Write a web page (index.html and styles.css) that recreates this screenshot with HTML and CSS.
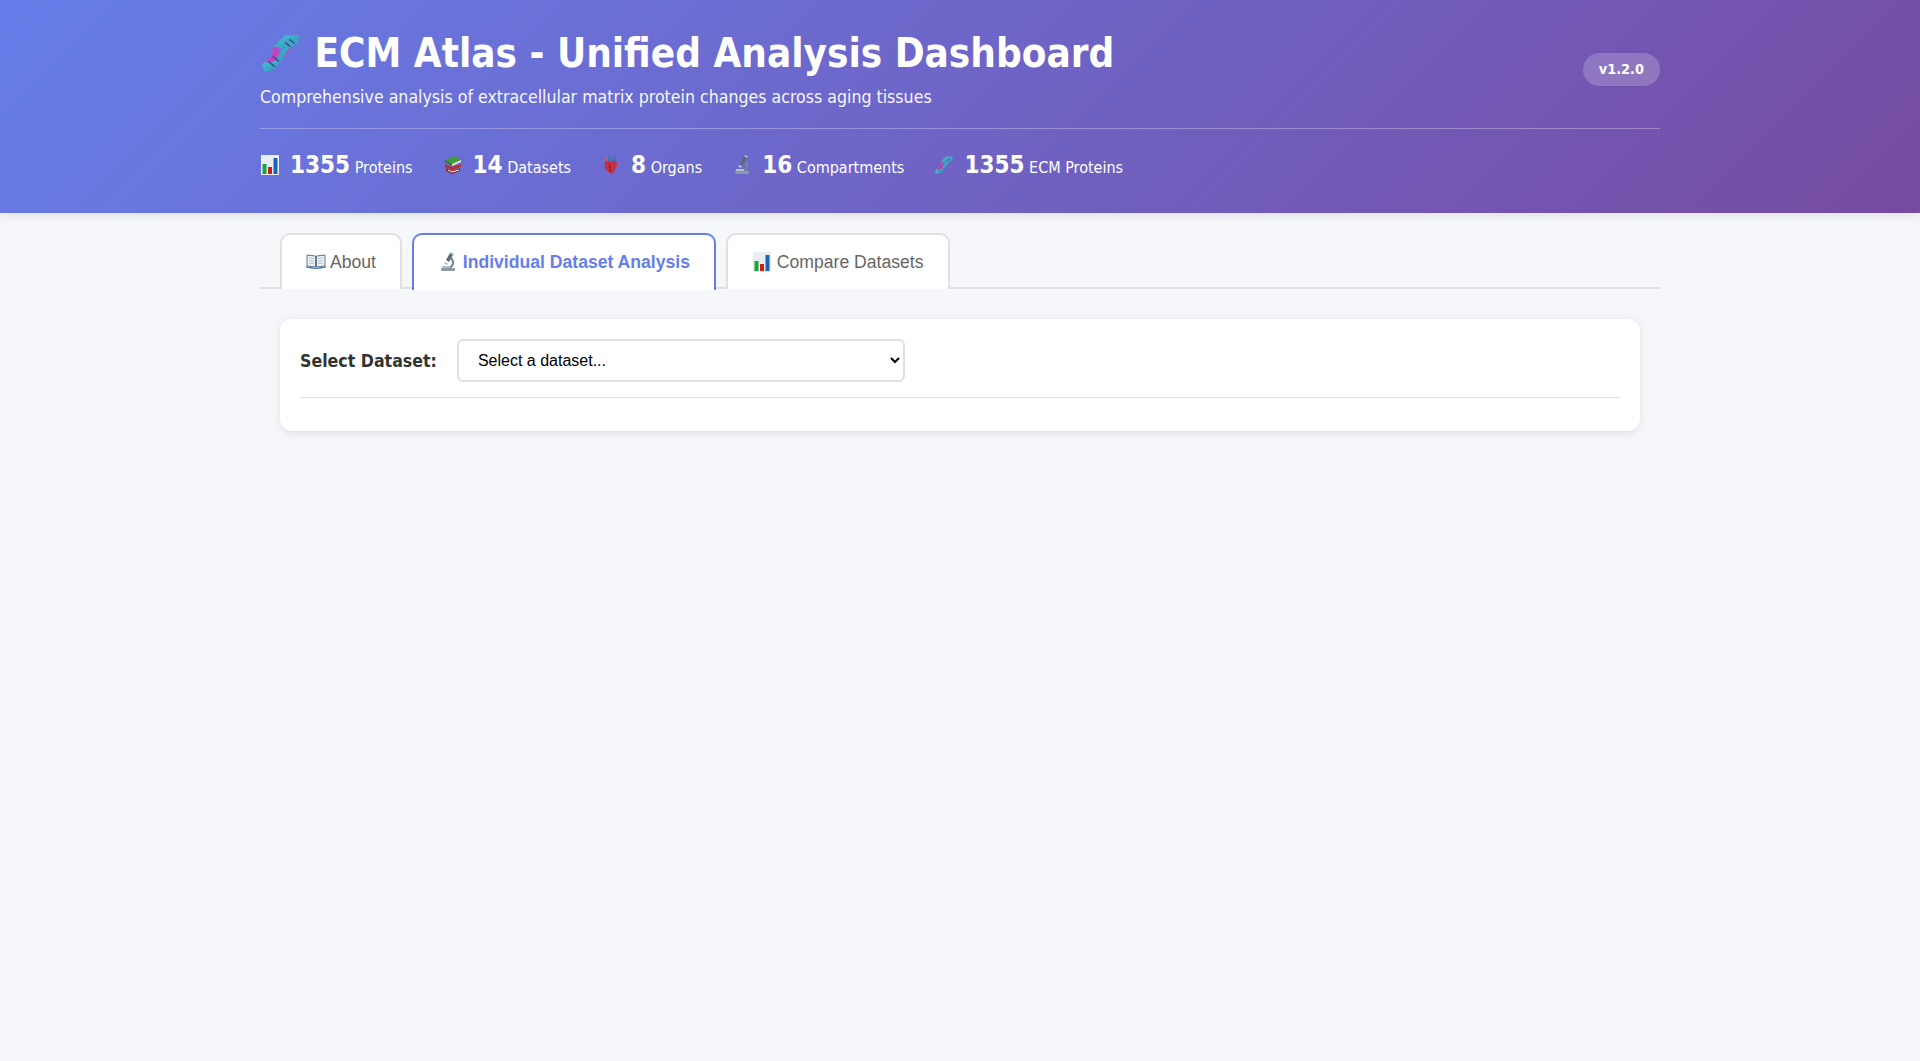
FILE: index.html
```html
<!DOCTYPE html>
<html lang="en">
<head>
  <meta charset="UTF-8">
  <meta name="viewport" content="width=device-width, initial-scale=1.0">
  <title>ECM Atlas - Unified Analysis Dashboard</title>
  <link rel="stylesheet" href="styles.css">
</head>
<body>
  <svg class="sprites" width="0" height="0" aria-hidden="true">
    <defs>
      <linearGradient id="dna-blue" x1="0" y1="0" x2="1" y2="1">
        <stop offset="0" stop-color="#4fc3d9"/>
        <stop offset="1" stop-color="#2a8fb0"/>
      </linearGradient>
      <symbol id="i-dna" viewBox="0 0 40 40">
        <path d="M7 35 C9 27 17 26 22 21 C27 16 28 9 36 5" fill="none" stroke="#d43cb4" stroke-width="5"/>
        <path d="M3 31 C11 34 16 30 19 25 C22 19 25 13 36 8" fill="none" stroke="url(#dna-blue)" stroke-width="5"/>
        <path d="M13 14 L24 3 L38 3 L37 8 C30 9 25 12 23 16" fill="url(#dna-blue)"/>
        <path d="M14 15 C18 22 10 26 7 32" fill="none" stroke="#d43cb4" stroke-width="5"/>
        <path d="M2 30 L20 27 L14 36 L4 38 Z" fill="url(#dna-blue)"/>
        <path d="M8 28 L14 33 M12 23 L18 28 M24 10 L29 14 M28 7 L33 11" stroke="#3b4f9e" stroke-width="1.6"/>
      </symbol>
      <symbol id="i-chart" viewBox="0 0 20 20">
        <rect x="1" y="0" width="18" height="20" fill="#e9eef2"/>
        <rect x="2.5" y="9" width="4" height="10" fill="#1aa53a"/>
        <rect x="8" y="12" width="4" height="7" fill="#c8201c"/>
        <rect x="13.5" y="3" width="4" height="16" fill="#1f63b8"/>
      </symbol>
      <symbol id="i-books" viewBox="0 0 20 20">
        <path d="M2 5 L11 1 L18 5 L9 9 Z" fill="#3f9a3c"/>
        <path d="M2 5 L9 9 L9 11 L2 7 Z" fill="#2d7a2d"/>
        <path d="M9 9 L18 5 L18 7 L9 11 Z" fill="#e8e8d8"/>
        <path d="M2 9 L9 12 L18 9 L18 12 L9 15 L2 12 Z" fill="#b8322e"/>
        <path d="M3 13 L9 15.5 L17 13 L17 16 L9 19 L3 16 Z" fill="#8c2a2a"/>
        <path d="M5 15 L9 17 L16 15" stroke="#eee" fill="none" stroke-width="1"/>
      </symbol>
      <symbol id="i-heart" viewBox="0 0 20 20">
        <path d="M10 19 C5 16 3 12 4 8 C5 5 8 5 10 7 C12 4 16 5 16 9 C16 13 13 17 10 19 Z" fill="#c9303f"/>
        <path d="M8 6 L8 1 M11 6 L11 2 M13 6 L15 2" stroke="#3a76b8" stroke-width="1.8"/>
        <path d="M6 6 L5 2" stroke="#d65a66" stroke-width="1.8"/>
        <path d="M9 9 C8 12 9 15 10 17" stroke="#7e1826" fill="none"/>
      </symbol>
      <symbol id="i-scope" viewBox="0 0 20 20">
        <rect x="3" y="16" width="14" height="3" rx="1" fill="#8d9aa5"/>
        <path d="M13 6 C17 10 15 15 10 16" fill="none" stroke="#7b8791" stroke-width="2"/>
        <path d="M8 8 L12 1 L15 3 L11 10 Z" fill="#5c6b78"/>
        <path d="M12 1 L15 3 L16 1.5 L13 0 Z" fill="#9fc3d6"/>
        <path d="M7 10 L10 11.5 L9 13 L6 11.5 Z" fill="#a9c4d4"/>
        <rect x="4" y="14" width="8" height="2" fill="#b4bec6"/>
      </symbol>
      <symbol id="i-book" viewBox="0 0 20 16">
        <path d="M1 2 L9.5 3 L9.5 14 L1 13 Z" fill="#eef2f4" stroke="#5f7688"/>
        <path d="M19 2 L10.5 3 L10.5 14 L19 13 Z" fill="#eef2f4" stroke="#5f7688"/>
        <path d="M3 5 L8 5.6 M3 7.5 L8 8.1 M3 10 L8 10.6 M12 5.6 L17 5 M12 8.1 L17 7.5 M12 10.6 L17 10" stroke="#9fb0bc" stroke-width=".8"/>
        <path d="M0 14 L10 15.5 L20 14" fill="none" stroke="#4f87b5" stroke-width="1.5"/>
      </symbol>
    </defs>
  </svg>

  <header class="header">
    <div class="header-inner">
      <div class="header-top">
        <div>
          <h1><svg class="title-icon"><use href="#i-dna"/></svg> ECM Atlas - Unified Analysis Dashboard</h1>
          <p class="subtitle">Comprehensive analysis of extracellular matrix protein changes across aging tissues</p>
        </div>
        <span class="version">v1.2.0</span>
      </div>
      <div class="stats">
        <div class="stat"><svg class="stat-icon"><use href="#i-chart"/></svg><strong>1355</strong> Proteins</div>
        <div class="stat"><svg class="stat-icon"><use href="#i-books"/></svg><strong>14</strong> Datasets</div>
        <div class="stat"><svg class="stat-icon"><use href="#i-heart"/></svg><strong>8</strong> Organs</div>
        <div class="stat"><svg class="stat-icon"><use href="#i-scope"/></svg><strong>16</strong> Compartments</div>
        <div class="stat"><svg class="stat-icon"><use href="#i-dna"/></svg><strong>1355</strong> ECM Proteins</div>
      </div>
    </div>
  </header>

  <main class="container">
    <nav class="tabs">
      <button class="tab"><svg class="tab-icon book"><use href="#i-book"/></svg> About</button>
      <button class="tab active"><svg class="tab-icon"><use href="#i-scope"/></svg> Individual Dataset Analysis</button>
      <button class="tab"><svg class="tab-icon"><use href="#i-chart"/></svg> Compare Datasets</button>
    </nav>
    <section class="card">
      <div class="selector">
        <label for="dataset">Select Dataset:</label>
        <select id="dataset">
          <option>Select a dataset...</option>
        </select>
      </div>
    </section>
  </main>
</body>
</html>
```

FILE: styles.css
```css
* {
  box-sizing: border-box;
}
body {
  margin: 0;
  min-height: 1061px;
  background-color: #f5f7fa;
  color: #333;
  font-family: "DejaVu Sans Condensed", "DejaVu Sans", sans-serif;
  font-stretch: condensed;
}
.sprites {
  position: absolute;
}
.header {
  height: 213px;
  padding-top: 30px;
  background: linear-gradient(135deg, #667eea 0%, #764ba2 100%);
  color: #fff;
  box-shadow: 0 2px 10px rgba(0, 0, 0, 0.1);
}
.header-inner {
  width: 1400px;
  margin: 0 auto;
}
.header-top {
  display: flex;
  justify-content: space-between;
  align-items: center;
  padding-bottom: 20px;
  border-bottom: 1px solid rgba(255, 255, 255, 0.3);
}
h1 {
  margin: 0 0 10px;
  font-size: 40px;
  line-height: 47px;
  font-weight: 700;
}
.title-icon {
  width: 42px;
  height: 42px;
  vertical-align: -7px;
}
.subtitle {
  margin: 0;
  font-size: 17.6px;
  line-height: 21px;
  opacity: 0.95;
}
.version {
  padding: 8px 16px;
  border-radius: 20px;
  background: rgba(255, 255, 255, 0.2);
  font-size: 14.4px;
  font-weight: 700;
  line-height: 17px;
}
.stats {
  display: flex;
  gap: 30px;
  margin-top: 22px;
  font-size: 16px;
}
.stat {
  display: flex;
  align-items: baseline;
  white-space: pre;
}
.stat strong {
  font-size: 24px;
}
.stat-icon {
  width: 20px;
  height: 20px;
  margin-right: 10px;
  align-self: center;
}
.container {
  width: 1400px;
  margin: 0 auto;
}
.tabs {
  display: flex;
  gap: 10px;
  height: 76px;
  padding: 20px 20px 0;
  border-bottom: 2px solid #e0e0e0;
}
.tab {
  height: 56px;
  padding: 0 24px;
  border: 2px solid #e0e0e0;
  border-bottom: none;
  border-radius: 10px 10px 0 0;
  background: #fff;
  color: #666;
  font-family: "Liberation Sans", Arial, sans-serif;
  font-size: 17.6px;
  cursor: pointer;
}
.tab.active {
  height: 57px;
  border-color: #667eea;
  color: #667eea;
  font-weight: 700;
}
.tab-icon {
  width: 20px;
  height: 20px;
  vertical-align: -4px;
}
.tab-icon.book {
  height: 16px;
  vertical-align: -1px;
}
.card {
  height: 112px;
  margin: 30px 20px 0;
  padding: 20px;
  border-radius: 12px;
  background: #fff;
  box-shadow: 0 2px 8px rgba(0, 0, 0, 0.1);
}
.selector {
  display: flex;
  align-items: center;
  gap: 20px;
  padding-bottom: 15px;
  border-bottom: 1px solid #e0e0e0;
}
.selector label {
  font-size: 17.6px;
  font-weight: 700;
}
.selector select {
  width: 448px;
  height: 43px;
  padding: 0 15px;
  border: 2px solid #e0e0e0;
  border-radius: 6px;
  background: #fff;
  color: #000;
  font-family: "Liberation Sans", Arial, sans-serif;
  font-size: 16px;
}
```
